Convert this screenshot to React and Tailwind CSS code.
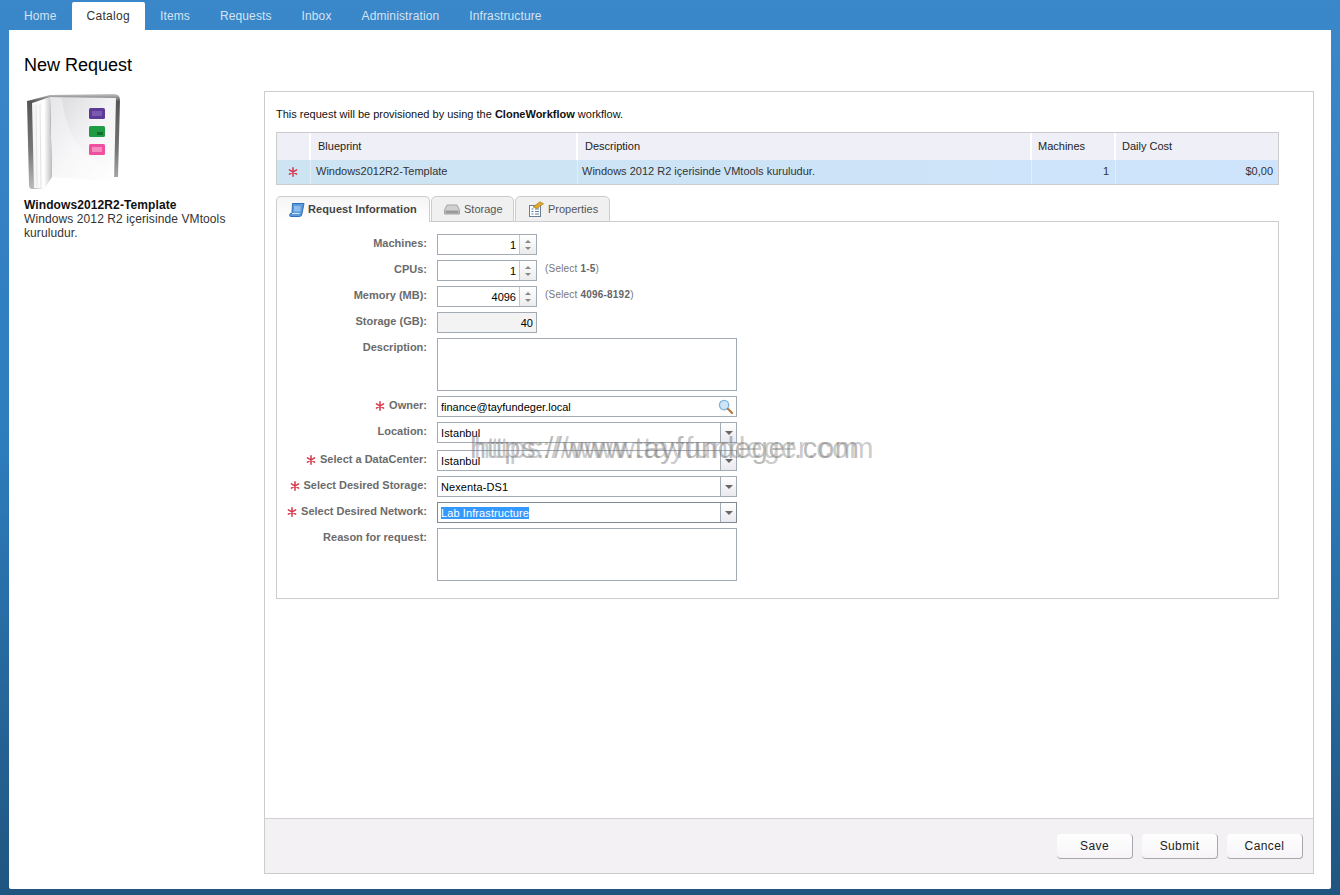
import React from 'react';

const navItems = ['Home', 'Catalog', 'Items', 'Requests', 'Inbox', 'Administration', 'Infrastructure'];

const Star = ({ className = '' }) => (
  <svg viewBox="0 0 10 10" className={`w-[10px] h-[10px] shrink-0 ${className}`} stroke="#d9364a" strokeWidth="1.5" strokeLinecap="round">
    <path d="M5 .8v8.4M1.4 2.9l7.2 4.2M8.6 2.9L1.4 7.1" />
  </svg>
);

const BookIcon = () => (
  <svg viewBox="0 0 94 97" className="w-[94px] h-[97px] ml-[3px] mt-[2px]">
    <defs>
      <linearGradient id="cover" x1="0" y1="0" x2="0" y2="1">
        <stop offset="0" stopColor="#c5c5c5" />
        <stop offset="0.08" stopColor="#555" />
        <stop offset="0.6" stopColor="#777" />
        <stop offset="1" stopColor="#bbb" />
      </linearGradient>
      <linearGradient id="page" x1="0" y1="0" x2="1" y2="1">
        <stop offset="0" stopColor="#d8d8dc" />
        <stop offset="0.5" stopColor="#f3f3f5" />
        <stop offset="1" stopColor="#ffffff" />
      </linearGradient>
      <linearGradient id="leaf" x1="0" y1="0" x2="1" y2="0">
        <stop offset="0" stopColor="#f2f2f2" />
        <stop offset="0.6" stopColor="#ffffff" />
        <stop offset="1" stopColor="#bdbdbd" />
      </linearGradient>
    </defs>
    <path d="M0 8L23 2L87 1Q93 1 93 7L91 84L24 84L16 96L5 96Q2 96 2 92Z" fill="url(#cover)" />
    <path d="M23 4L89 5L87 88L25 84Z" fill="url(#page)" />
    <path d="M35 5Q40 60 87 78L87 88L25 84L23 4Z" fill="#fff" opacity="0.35" />
    <path d="M5 10L23 4L25 84L17 96L7 95Z" fill="url(#leaf)" />
    <path d="M9 12L10 94M13 11L14 95" stroke="#e4e4e4" strokeWidth="1" />
    <rect x="62" y="15" width="16" height="11" rx="1.5" fill="#5c3a96" />
    <rect x="65" y="18" width="10" height="5" fill="#7a5ab0" />
    <rect x="62" y="33" width="16" height="11" rx="1.5" fill="#1f9a45" />
    <rect x="70" y="39" width="6" height="3" fill="#136b2e" />
    <rect x="62" y="51" width="16" height="11" rx="1.5" fill="#ee4f9f" />
    <rect x="65" y="54" width="10" height="5" fill="#f58cc0" />
  </svg>
);

const ScrollIcon = () => (
  <svg viewBox="0 0 16 16" className="w-4 h-4 shrink-0">
    <path d="M3.5 1.5H15L13 11.5Q12.8 14.5 10.5 14.5H1.5Q.5 14.5 .8 13L1.2 11.5H3Z" fill="#5b9bdc" stroke="#2f6fb5" strokeWidth="1" />
    <rect x="5" y="4" width="6.5" height="5.5" fill="#8dbdee" />
    <path d="M3 11.5H10.5" stroke="#d5e7f8" />
  </svg>
);

const DriveIcon = () => (
  <svg viewBox="0 0 16 16" className="w-4 h-4 shrink-0">
    <path d="M3 4H13L15.5 9V13H.5V9Z" fill="#d0d0d0" stroke="#a5a5a5" strokeWidth="1" />
    <rect x="1.5" y="9.5" width="13" height="3" fill="#9a9a9a" />
  </svg>
);

const PropsIcon = () => (
  <svg viewBox="0 0 16 16" className="w-4 h-4 shrink-0">
    <rect x="1.5" y="4.5" width="11" height="11" fill="#fff" stroke="#6a7f96" />
    <path d="M3.5 8h2M3.5 10.5h2M3.5 13h2M7 8h4M7 10.5h4M7 13h4" stroke="#5e7fa6" strokeWidth="1" />
    <path d="M5 6L12 .8L15.5 2.8L9 7.5Z" fill="#e2a92c" stroke="#9c7516" strokeWidth="0.6" />
  </svg>
);

const SearchIcon = () => (
  <svg viewBox="0 0 16 16" className="w-[15px] h-[15px]">
    <circle cx="6.5" cy="6.5" r="5" fill="#cfe5f7" stroke="#7fb2dc" strokeWidth="1.4" />
    <path d="M10.5 10.5L15 15" stroke="#b5763a" strokeWidth="2.2" strokeLinecap="round" />
  </svg>
);

const Row = ({ label, required, children, className = '' }) => (
  <div className={`flex ${className}`}>
    <div className="w-[150px] flex items-center justify-end gap-[4px] h-[19px] font-bold text-[#6b6b6b] whitespace-nowrap">
      {required && <Star />}
      <span>{label}</span>
    </div>
    <div className="ml-[10px] flex items-start">{children}</div>
  </div>
);

const Spinner = ({ value, hint }) => (
  <>
    <div className="w-[100px] h-[21px] border border-[#a3abb5] bg-white flex">
      <div className="flex-1 text-right pr-[3px] pt-[2px] text-black leading-[16px]">{value}</div>
      <div className="w-[17px] border-l border-[#c4c9cf] bg-gradient-to-b from-white to-[#ececec] flex flex-col items-center justify-center gap-[4px]">
        <span className="w-0 h-0 border-x-[3px] border-x-transparent border-b-[3px] border-b-[#888]" />
        <span className="w-0 h-0 border-x-[3px] border-x-transparent border-t-[3px] border-t-[#888]" />
      </div>
    </div>
    {hint && (
      <span className="ml-2 mt-[1px] text-[10px] text-[#777] leading-[16px] tracking-[0.2px]">
        (Select <b className="text-[#666]">{hint}</b>)
      </span>
    )}
  </>
);

const Select = ({ value, selected }) => (
  <div className={`w-[300px] h-[21px] border bg-white flex ${selected ? 'border-[#7f8994]' : 'border-[#a3abb5]'}`}>
    <div className="flex-1 pl-[3px] pt-[2px] leading-[16px] text-black tracking-[0.1px]">
      {selected ? <span className="bg-[#3399ff] text-white inline-block leading-[12px] mt-[2px]">{value}</span> : value}
    </div>
    <div className="w-4 border-l border-[#a3abb5] bg-gradient-to-b from-white to-[#e9e9ef] flex items-center justify-center">
      <span className="w-0 h-0 border-x-[4px] border-x-transparent border-t-[4px] border-t-[#666]" />
    </div>
  </div>
);

const TextArea = () => <div className="w-[300px] h-[53px] border border-[#a3abb5] bg-white" />;

const App = () => {
  return (
    <div className="relative w-[1340px] h-[895px] overflow-hidden flex flex-col bg-gradient-to-b from-[#3a87c9] via-[#2d7cbc] to-[#205580] font-[family-name:Liberation_Sans,Arial,sans-serif] text-[11px] text-[#222]">
      <div className="h-[30px] pl-[9px] flex shrink-0">
        {navItems.map((item) => (
          <div
            key={item}
            className={
              item === 'Catalog'
                ? 'mt-[2px] px-[15px] bg-white rounded-t-[2px] text-[#333] text-[12px] leading-[28px] tracking-[0.3px]'
                : 'mt-[2px] px-[15px] text-[#d4e4f3] text-[12px] leading-[28px] tracking-[0.12px]'
            }
          >
            {item}
          </div>
        ))}
      </div>

      <div className="mx-[9px] h-[859px] bg-white rounded-b-[2px] px-[15px] pb-[15px] flex flex-col">
        <h1 className="pt-[23px] h-[61px] text-[18px] leading-[24px] text-black">New Request</h1>

        <div className="flex flex-1 min-h-0">
          <div className="w-[240px] shrink-0">
            <BookIcon />
            <div className="mt-[8px] w-[222px] text-[12px] leading-[14px] text-[#333] tracking-[0.1px]">
              <div className="font-bold text-[#111]">Windows2012R2-Template</div>
              <div>Windows 2012 R2 içerisinde VMtools kuruludur.</div>
            </div>
          </div>

          <div className="w-[1050px] border border-[#ccc] flex flex-col">
            <div className="flex-1 px-[11px]">
              <p className="pt-[15px] h-[40px] leading-[14px] text-[#111]">
                This request will be provisioned by using the <b>CloneWorkflow</b> workflow.
              </p>

              <div className="w-[1003px] border border-[#ccc] text-[#222]">
                <div className="grid grid-cols-[34px_267px_454px_84px_1fr] h-[27px] bg-[#eeeff7] leading-[26px]">
                  <div className="border-r-2 border-white" />
                  <div className="border-r-2 border-white pl-[7px]">Blueprint</div>
                  <div className="border-r-2 border-white pl-[7px]">Description</div>
                  <div className="border-r-2 border-white pl-[6px]">Machines</div>
                  <div className="pl-[6px]">Daily Cost</div>
                </div>
                <div className="grid grid-cols-[34px_267px_454px_84px_1fr] h-[24px] bg-gradient-to-r from-[#cde4f3] to-[#cde4fc] leading-[23px] text-[#333]">
                  <div className="border-r border-[#e4eef6] flex items-center justify-center pr-[1px]"><Star /></div>
                  <div className="border-r border-[#e4eef6] pl-[5px]">Windows2012R2-Template</div>
                  <div className="border-r border-[#e4eef6] pl-[4px]">Windows 2012 R2 içerisinde VMtools kuruludur.</div>
                  <div className="border-r border-[#e4eef6] text-right pr-[6px]">1</div>
                  <div className="text-right pr-[5px]">$0,00</div>
                </div>
              </div>

              <div className="mt-[11px] w-[1003px] h-[26px] flex gap-px relative z-10">
                <div className="w-[154px] h-[26px] border border-b-0 border-[#ccc] rounded-t-[5px] bg-gradient-to-b from-[#f5f5f5] to-white flex items-center pl-[12px] gap-[3px] font-bold text-[#444] tracking-[0.1px]">
                  <ScrollIcon />
                  Request Information
                </div>
                <div className="w-[83px] h-[26px] border border-[#ccc] rounded-t-[5px] bg-[#f0f0f0] flex items-center pl-[12px] gap-[4px] text-[#555]">
                  <DriveIcon />
                  Storage
                </div>
                <div className="w-[95px] h-[26px] border border-[#ccc] rounded-t-[5px] bg-[#f0f0f0] flex items-center pl-[12px] gap-[4px] text-[#555]">
                  <PropsIcon />
                  Properties
                </div>
              </div>

              <div className="w-[1003px] h-[378px] -mt-px border border-[#ccc] pt-[12px] flex flex-col gap-[5px]">
                <Row label="Machines:"><Spinner value="1" /></Row>
                <Row label="CPUs:"><Spinner value="1" hint="1-5" /></Row>
                <Row label="Memory (MB):"><Spinner value="4096" hint="4096-8192" /></Row>
                <Row label="Storage (GB):">
                  <div className="w-[100px] h-[21px] border border-[#a3abb5] bg-[#f3f3f3] text-right pr-[3px] pt-[2px] leading-[16px] text-black">40</div>
                </Row>
                <Row label="Description:"><TextArea /></Row>
                <Row label="Owner:" required>
                  <div className="w-[300px] h-[21px] border border-[#a3abb5] bg-white flex items-center justify-between pl-[3px] pr-[3px] text-black">
                    <span className="pt-[1px]">finance@tayfundeger.local</span>
                    <SearchIcon />
                  </div>
                </Row>
                <Row label="Location:"><Select value="Istanbul" /></Row>
                <Row label="Select a DataCenter:" required className="mt-[2px]"><Select value="Istanbul" /></Row>
                <Row label="Select Desired Storage:" required><Select value="Nexenta-DS1" /></Row>
                <Row label="Select Desired Network:" required><Select value="Lab Infrastructure" selected /></Row>
                <Row label="Reason for request:"><TextArea /></Row>
              </div>
            </div>

            <div className="h-[55px] shrink-0 border-t border-[#d3d0d5] bg-[#f4f1f5] flex justify-end gap-[9px] pt-[15px] pr-[10px]">
              {['Save', 'Submit', 'Cancel'].map((b) => (
                <button
                  key={b}
                  className="w-[76px] h-[25px] rounded-[4px] border-r border-b border-[#aaa6ae] bg-gradient-to-b from-white to-[#f6f4f7] text-[12px] text-[#222] tracking-[0.4px]"
                >
                  {b}
                </button>
              ))}
            </div>
          </div>
        </div>
      </div>

      {/* watermark over the form */}
      <div className="absolute left-[470px] top-[432px] text-[29px] leading-[32px] text-[#777]/50 whitespace-nowrap pointer-events-none tracking-[0.7px]">https://www.tayfundeger.com</div>
      <div className="absolute left-[474px] top-[432px] text-[29px] leading-[32px] text-[#777]/40 whitespace-nowrap pointer-events-none tracking-[1.1px]">https://www.tayfundeger.com</div>
    </div>
  );
};

export default App;
